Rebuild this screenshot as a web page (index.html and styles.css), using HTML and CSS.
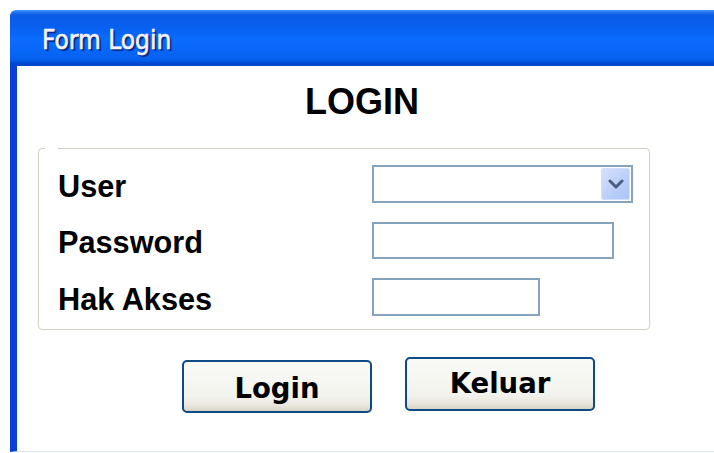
FILE: index.html
```html
<!DOCTYPE html>
<html lang="id">
<head>
<meta charset="utf-8">
<title>Form Login</title>
<link rel="stylesheet" href="styles.css">
</head>
<body>
<div class="window">
  <div class="titlebar"><span class="title">Form Login</span></div>
  <div class="client">
    <h1 class="heading">LOGIN</h1>
    <fieldset class="group">
      <legend class="group-gap"></legend>
      <div class="fields">
        <label class="label" for="user">User</label>
        <div class="select" id="user">
          <span class="select-btn">
            <svg width="16" height="10" viewBox="0 0 16 10"><path d="M2 2 L8 8 L14 2" fill="none" stroke="#4a5d82" stroke-width="3" stroke-linecap="round" stroke-linejoin="round"/></svg>
          </span>
        </div>
        <label class="label" for="pass">Password</label>
        <input class="input input-pass" id="pass" type="text">
        <label class="label" for="akses">Hak Akses</label>
        <input class="input input-akses" id="akses" type="text">
      </div>
    </fieldset>
    <div class="actions">
      <button class="btn btn-login" type="button">Login</button>
      <button class="btn btn-exit" type="button">Keluar</button>
    </div>
  </div>
</div>
</body>
</html>
```
FILE: styles.css
```css
html, body {
  margin: 0;
  background: #ffffff;
  overflow: hidden;
}

body {
  font-family: "Liberation Sans", Arial, sans-serif;
}

.window {
  margin: 10px 0 0 10px;
  width: 720px;
}

/* blue caption bar */
.titlebar {
  height: 56px;
  border-radius: 6px 0 0 0;
  background: linear-gradient(to bottom,
    #4a90f8 0px, #2a78f0 2px, #0a5ce4 5px, #0860f0 18px,
    #0a6cff 30px, #0866f6 42px, #0560ec 50px, #0048d4 53px, #0046cc 56px);
  padding-left: 32px;
  display: flex;
  align-items: center;
  padding-top: 3px;
  box-sizing: border-box;
}

.title {
  font-family: "DejaVu Sans Condensed", "DejaVu Sans", sans-serif;
  font-stretch: condensed;
  font-size: 26px;
  color: #f4f2ff;
  -webkit-text-stroke: 0.6px #f4f2ff;
  text-shadow: 1px 1px 0 #0a1c6e, 2px 2px 1px #0a2a8a;
}

/* window body */
.client {
  height: 386px;
  box-sizing: border-box;
  border-left: 7px solid #0b3fd9;
  border-bottom: 1px solid #dce5f7;
  padding-top: 18px;
}

.heading {
  margin: 0;
  width: 690px;
  text-align: center;
  font-size: 36px;
  line-height: 36px;
  font-weight: bold;
  color: #000;
}

.group {
  margin: 28px 0 0 21px;
  width: 612px;
  height: 182px;
  box-sizing: border-box;
  border: 1px solid #d2d2c2;
  border-radius: 4px;
  padding: 16px 0 0 0;
  min-width: 0;
}

.group-gap {
  margin-left: 6px;
  padding: 0;
  width: 13px;
  height: 0;
}

.fields {
  display: grid;
  grid-template-columns: 314px auto;
  row-gap: 19px;
  align-items: center;
  justify-items: start;
  padding-left: 19px;
}

.label {
  font-size: 30.7px;
  font-weight: bold;
  color: #000;
  line-height: 30px;
  padding-top: 5px;
}

.select, .input {
  box-sizing: border-box;
  border: 2px solid #86a3c0;
  background: #fff;
  margin: 0;
  padding: 0;
  outline: none;
}

.select {
  width: 261px;
  height: 38px;
  display: flex;
  justify-content: flex-end;
  padding: 1px;
}

.select-btn {
  width: 29px;
  height: 32px;
  box-sizing: border-box;
  border: 1px solid #d4e0fb;
  border-radius: 2px;
  background: linear-gradient(to bottom right, #d6e2fd, #b8cdf8 60%, #aec5f6);
  display: flex;
  align-items: center;
  justify-content: center;
}

.input-pass {
  width: 242px;
  height: 37px;
}

.input-akses {
  width: 168px;
  height: 38px;
}

.actions {
  display: flex;
  align-items: flex-start;
  gap: 33px;
  padding-left: 165px;
  margin-top: 27px;
}

.btn {
  width: 190px;
  box-sizing: border-box;
  border: 2px solid #0d4a86;
  border-radius: 5px;
  background: linear-gradient(to bottom, #f9f9f6 0%, #f3f3ee 70%, #e9e7de 88%, #d8d4c6 100%);
  font-family: "DejaVu Sans", sans-serif;
  font-weight: bold;
  font-size: 27.5px;
  color: #000;
  padding: 0;
  margin: 0;
}

.btn-login {
  height: 53px;
  margin-top: 3px;
  padding-top: 2px;
}

.btn-exit {
  height: 54px;
  padding-bottom: 2px;
}
```
